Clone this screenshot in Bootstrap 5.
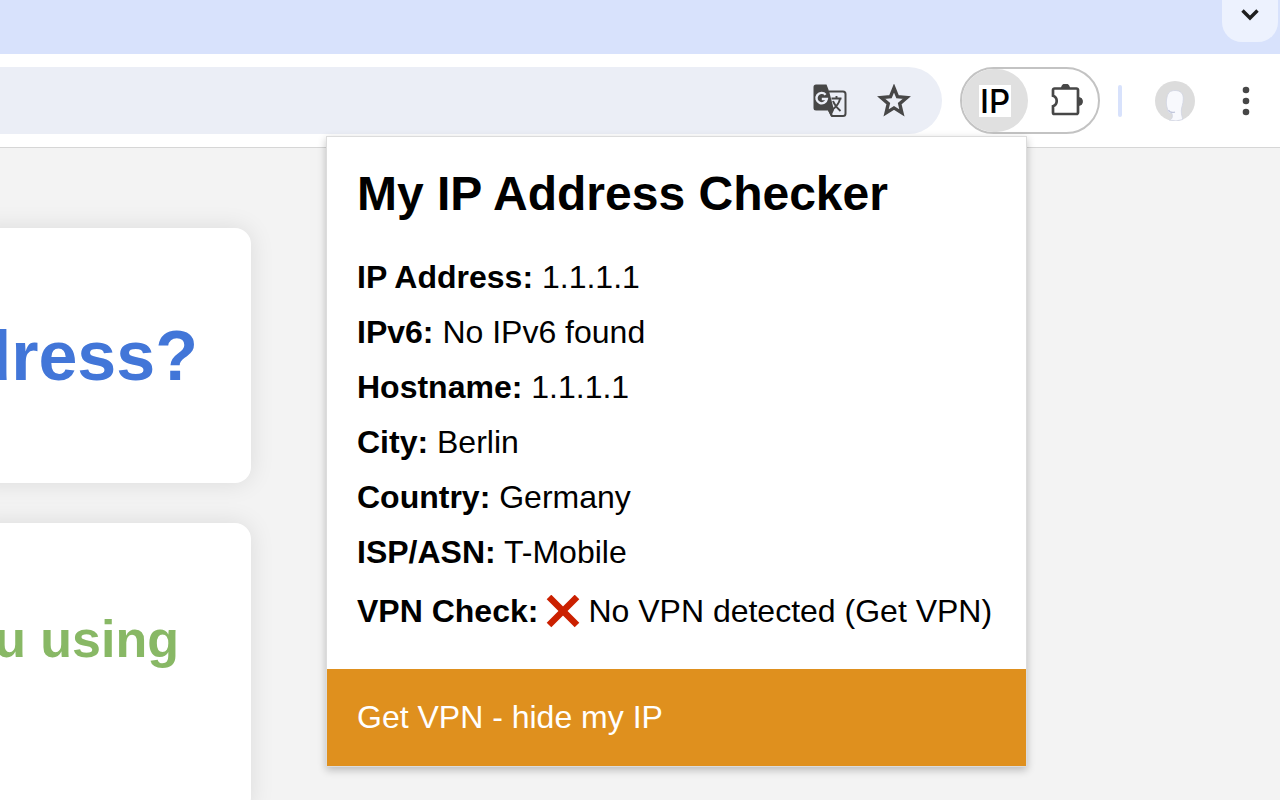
<!DOCTYPE html>
<html lang="en">
<head>
<meta charset="utf-8">
<meta name="viewport" content="width=device-width, initial-scale=1">
<title>My IP Address Checker</title>
<link href="https://cdn.jsdelivr.net/npm/bootstrap@5.3.0/dist/css/bootstrap.min.css" rel="stylesheet">
<style>
  body { font-family: "Liberation Sans", Arial, sans-serif; background: #f3f3f3; color: #000; }
  svg { display: block; }
  .tab-strip { background: #d8e2fc; height: 54px; padding-right: 2px; }
  .tab-menu { width: 56px; height: 42px; background: #edf2fe; border-radius: 0 0 20px 20px; padding-bottom: 14px; }
  .toolbar { height: 94px; background: #fff; border-bottom: 1px solid #d6d6d6; padding: 13px 22px 13px 0; z-index: 2; }
  .omnibox { height: 67px; background: #ebeef6; border-radius: 0 34px 34px 0; padding-right: 31px; gap: 30px; }
  .omnibox input { background: transparent; outline: 0; font-size: 32px; min-width: 0; }
  .ext-pill { width: 140px; height: 67px; border: 2px solid #c3c3c3; border-radius: 34px; margin: 0 18px 0 18px; padding-right: 14px; }
  .ext-active { width: 66px; height: 63px; background: #e0e0e0; border-radius: 33px; }
  .ext-logo { width: 32px; height: 32px; background: #fff; font: 500 33px/32px Inter, sans-serif; color: #000; }
  .split { width: 4px; height: 32px; background: #d8e2fc; border-radius: 2px; }
  .avatar { margin: 0 39px 0 33px; }
  .popup { top: 82px; right: 253px; width: 701px; background: #fff; border: 1px solid #dcdcdc; box-shadow: 0 3px 8px rgba(0,0,0,.24); }
  .popup-main { padding: 30px 30px 40px; }
  .popup h1 { font-size: 48px; line-height: 54px; font-weight: 700; margin: 0 0 39px; }
  .facts { font-size: 32px; line-height: 35px; gap: 20px; }
  .cross { width: 34px; height: 34px; margin: 0 8px 0 8px; }
  .popup a { color: inherit; text-decoration: none; }
  .popup .promo { background: #df901e; color: #fff; font-size: 32px; line-height: 35px; padding: 31px 30px 31px; }
  .page { width: 281px; margin-left: -30px; padding-top: 80px; gap: 40px; }
  .panel { background: #fff; border-radius: 16px; box-shadow: 0 0 24px rgba(0,0,0,.1); white-space: nowrap; height: 255px; }
  .panel-tall { height: 290px; padding-top: 86px; }
  .panel h2 { font-size: 70px; line-height: 80px; font-weight: 700; color: #4276d8; margin: 0 53px 0 0; }
  .panel h3 { font-size: 52px; line-height: 60px; font-weight: 700; color: #88b865; margin: 0 72px 0 0; }
</style>
</head>
<body class="vh-100 overflow-hidden">
<header>
  <div class="tab-strip d-flex justify-content-end align-items-start">
    <button class="tab-menu border-0 d-flex align-items-center justify-content-center" aria-label="Search tabs">
      <svg width="18" height="12" viewBox="0 0 18 12"><path d="M1.500 1.500l7.500 7.500 7.500-7.500" fill="none" stroke="#1f1f1f" stroke-width="3.400"/></svg>
    </button>
  </div>
  <div class="toolbar position-relative d-flex align-items-center">
    <div class="omnibox flex-grow-1 d-flex align-items-center">
      <input type="text" class="flex-grow-1 border-0" aria-label="Address">
      <button class="btn border-0 p-0" aria-label="Translate">
        <svg width="34" height="34" viewBox="0 0 34 34">
          <path d="M16 7.500h14a2.500 2.500 0 0 1 2.500 2.500v19.500a2.500 2.500 0 0 1-2.500 2.500H19l-3-6" fill="none" stroke="#474747" stroke-width="2"/>
          <path d="M3 .5h10.500l2.500 6.500 5 19-3 6.500-3-6H3a2.500 2.500 0 0 1-2.500-2.500V3A2.500 2.500 0 0 1 3 .5z" fill="#474747"/>
          <path d="M12.600 10.700A5.200 5.200 0 1 0 13.800 15H8.800" fill="none" stroke="#ebeef6" stroke-width="2.400"/>
          <path d="M18.500 14.500h10M23.500 12v2.500M27 15c-1 4.500-4 8-8 11M20 17c1.500 4 4 7 7.500 10" fill="none" stroke="#474747" stroke-width="1.900"/>
        </svg>
      </button>
      <button class="btn border-0 p-0" aria-label="Bookmark this page">
        <svg width="34" height="34" viewBox="0 0 34 34"><path d="M17 4l3.500 8.700 9.300.8-7.100 6.200 2.200 9.200-7.900-5-7.900 5 2.200-9.200-7.100-6.200 9.300-.8z" fill="none" stroke="#474747" stroke-width="3.400"/></svg>
      </button>
    </div>
    <div class="ext-pill d-flex align-items-center justify-content-between">
      <button class="ext-active border-0 p-0 d-flex align-items-center justify-content-center" aria-label="My IP Address Checker"><span class="ext-logo d-flex justify-content-center">IP</span></button>
      <button class="btn border-0 p-0" aria-label="Extensions">
        <svg width="34" height="34" viewBox="0 0 34 34">
          <path d="M4.500 4.500h22a1.500 1.500 0 0 1 1.500 1.500v22.500a1.500 1.500 0 0 1-1.500 1.500h-22a1.500 1.500 0 0 1-1.500-1.500v-6.300a5.500 5.500 0 0 0 0-10.400V6a1.500 1.500 0 0 1 1.500-1.500z" fill="none" stroke="#474747" stroke-width="2.700"/>
          <path d="M11.500 4a4 4 0 0 1 8 0zM28.500 13.500a4 4 0 0 1 0 8z" fill="#474747" stroke="#474747"/>
        </svg>
      </button>
    </div>
    <span class="split"></span>
    <button class="avatar btn border-0 p-0" aria-label="Profile">
      <svg width="40" height="40" viewBox="0 0 40 40">
        <circle cx="20" cy="20" r="20" fill="#dcdcdc"/>
        <path d="M20 9.500c5.500 0 8.500 3 8.300 8.500 0 5-2 8-2 12 0 4 1 6 1.500 8.500a20 20 0 0 1-13.500.5c3.500-1 3.500-4 2.700-6.500-3 .2-4.500-1.500-4.500-4.500-1.500-4-1.500-8-.5-12 1-4.500 3.500-6.500 8-6.500z" fill="#f8f9fd" stroke="#d0d4e2" stroke-width=".8"/>
        <path d="M13.500 29c1 2.500 3.500 2.800 6.500 2.200" fill="none" stroke="#c2c7dc" stroke-width="1.200"/>
      </svg>
    </button>
    <button class="btn border-0 p-0" aria-label="Menu">
      <svg width="24" height="30" viewBox="0 0 24 30" fill="#474747"><circle cx="12" cy="4" r="3.300"/><circle cx="12" cy="15" r="3.300"/><circle cx="12" cy="26" r="3.300"/></svg>
    </button>

    <section class="popup position-absolute">
      <div class="popup-main">
        <h1>My IP Address Checker</h1>
        <div class="facts d-flex flex-column text-nowrap">
          <div><strong>IP Address:</strong> 1.1.1.1</div>
          <div><strong>IPv6:</strong> No IPv6 found</div>
          <div><strong>Hostname:</strong> 1.1.1.1</div>
          <div><strong>City:</strong> Berlin</div>
          <div><strong>Country:</strong> Germany</div>
          <div><strong>ISP/ASN:</strong> T-Mobile</div>
          <div class="d-flex align-items-center pt-1"><strong>VPN Check:</strong>
            <svg class="cross" viewBox="0 0 34 34" role="img" aria-label="No"><path d="M3 2l28 28M31 2L3 30" stroke="#cb2000" stroke-width="6.500"/></svg>
            <span>No VPN detected (<a href="#">Get VPN</a>)</span></div>
        </div>
      </div>
      <a href="#" class="promo d-block">Get VPN - hide my IP</a>
    </section>
  </div>
</header>
<main class="page d-flex flex-column">
  <section class="panel d-flex align-items-center justify-content-end"><h2>dress?</h2></section>
  <section class="panel panel-tall d-flex align-items-start justify-content-end"><h3>u using</h3></section>
</main>
<script src="https://cdn.jsdelivr.net/npm/bootstrap@5.3.0/dist/js/bootstrap.bundle.min.js"></script>
</body>
</html>
